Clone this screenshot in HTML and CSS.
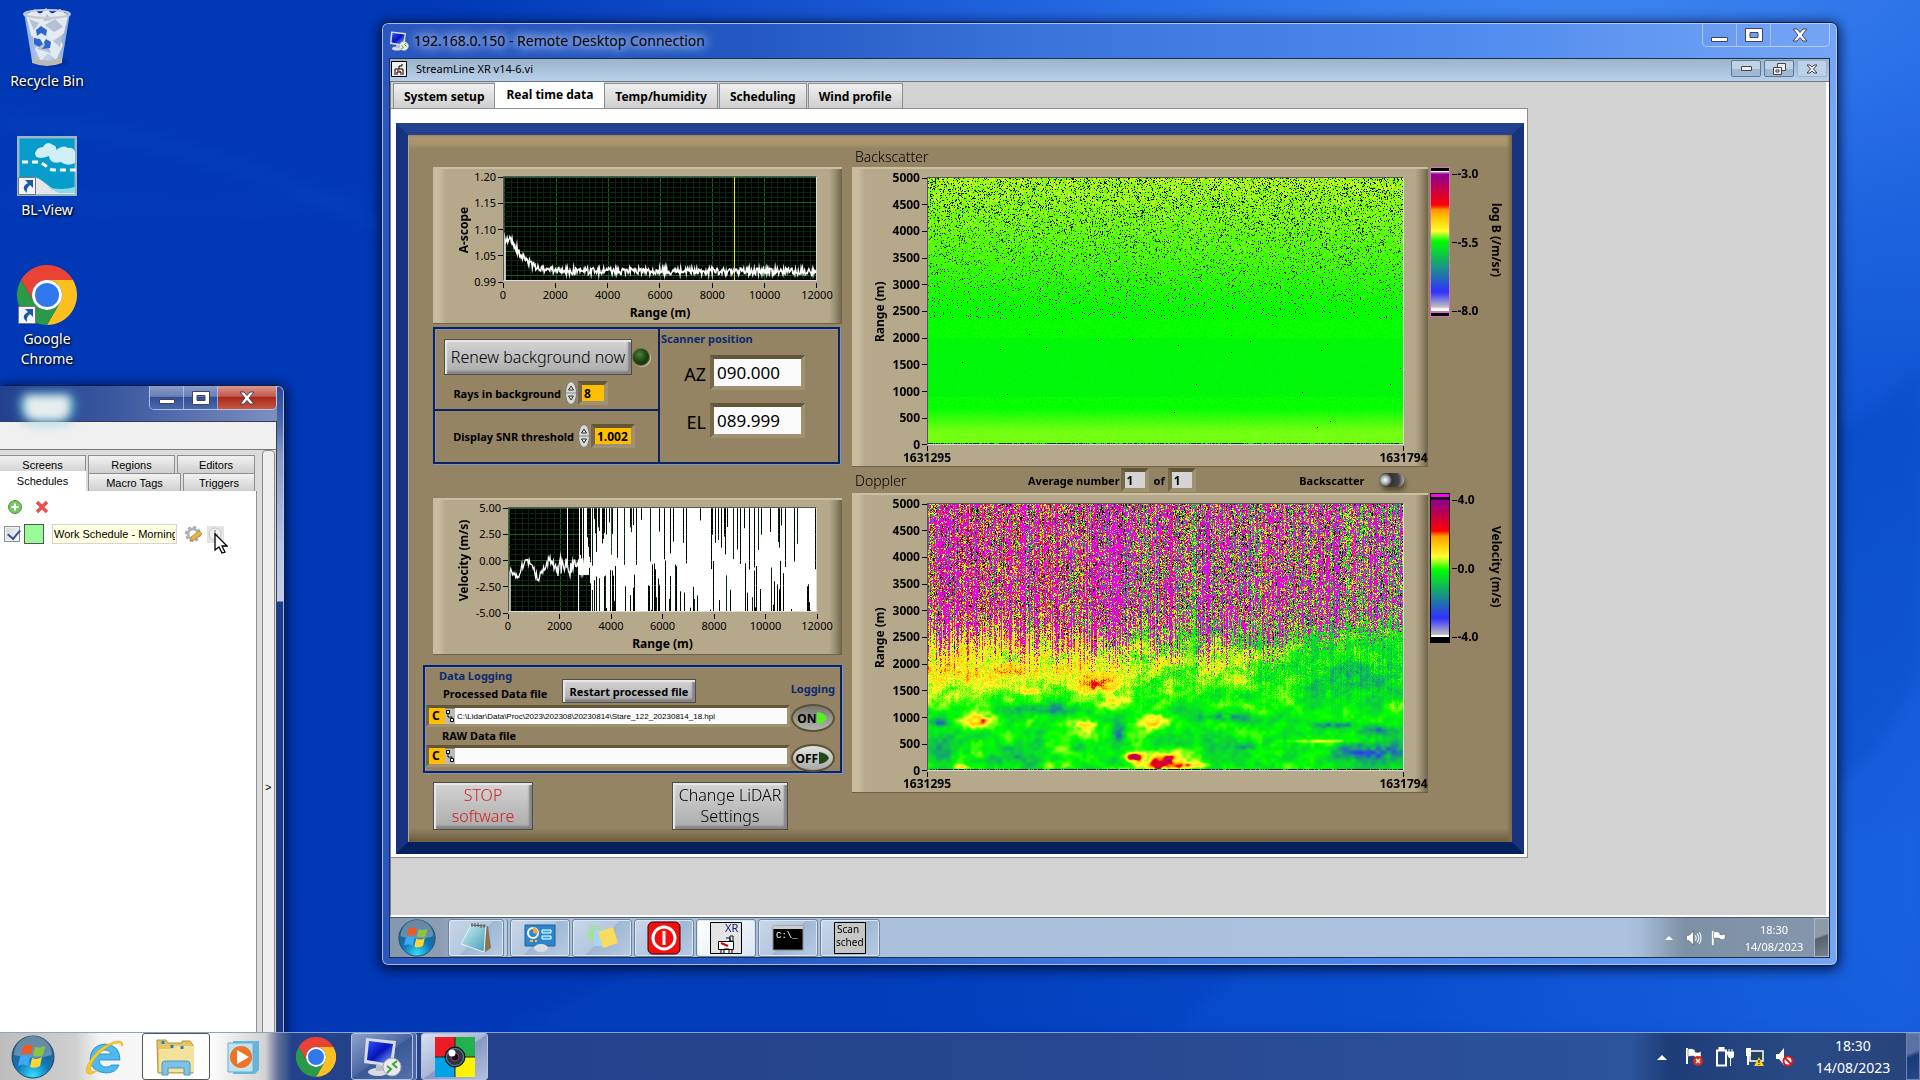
FILE: index.html
```html
<!DOCTYPE html>
<html lang="en">
<head>
    <meta charset="UTF-8">
    <meta name="viewport" content="width=device-width, initial-scale=1.0">
    <title>StreamLine XR - Remote Desktop</title>
    <link rel="stylesheet" href="styles.css">
</head>
<body>
    <!-- Shared icons -->
    <svg class="sprite" width="0" height="0" aria-hidden="true">
        <defs>
            <radialGradient id="orbFill" cx="50%" cy="95%" r="90%">
                <stop offset="0" stop-color="#35e0ff"/>
                <stop offset="0.45" stop-color="#1176b4"/>
                <stop offset="1" stop-color="#2f5878"/>
            </radialGradient>
            <linearGradient id="screenFill" x1="0" y1="0" x2="1" y2="1">
                <stop offset="0" stop-color="#2f55ff"/>
                <stop offset="0.5" stop-color="#0614b8"/>
                <stop offset="1" stop-color="#8db4ff"/>
            </linearGradient>
            <linearGradient id="paperFill" x1="0" y1="0" x2="1" y2="1">
                <stop offset="0" stop-color="#d5f2f6"/>
                <stop offset="1" stop-color="#3f9cb4"/>
            </linearGradient>
            <linearGradient id="binFill" x1="0" y1="0" x2="1" y2="0">
                <stop offset="0" stop-color="#a5bfe8"/>
                <stop offset="0.5" stop-color="#e4edf8"/>
                <stop offset="1" stop-color="#9db7de"/>
            </linearGradient>
        </defs>
        <symbol id="chrome" viewBox="0 0 48 48">
            <path fill="#ea4335" d="M3.2 12A24 24 0 0 1 44.8 12H24A12 12 0 0 0 13.6 30Z"/>
            <path fill="#fcc01e" d="M44.8 12A24 24 0 0 1 24 48L34.4 30A12 12 0 0 0 24 12Z"/>
            <path fill="#2a9a48" d="M24 48A24 24 0 0 1 3.2 12L13.6 30A12 12 0 0 0 34.4 30Z"/>
            <circle cx="24" cy="24" r="12" fill="#fff"/>
            <circle cx="24" cy="24" r="9.6" fill="#2f79ec"/>
        </symbol>
        <symbol id="orb" viewBox="0 0 44 44">
            <circle cx="22" cy="22" r="21" fill="url(#orbFill)" stroke="#164a74"/>
            <path d="M3 20A19 19 0 0 1 41 20Q22 26 3 20Z" fill="#fff" opacity="0.28"/>
            <path fill="#ee5a24" d="M12 11Q17 8 22 11L20 20Q15 17 10 20Z"/>
            <path fill="#8cc63e" d="M24 12Q28 14 34 11L32 20Q27 23 22 20Z"/>
            <path fill="#3fa9f5" d="M9 22Q14 19 19 22L17 31Q12 28 7 31Z"/>
            <path fill="#fdd835" d="M21 23Q26 25 31 22L29 31Q24 34 19 32Z"/>
        </symbol>
        <symbol id="rdc" viewBox="0 0 40 40">
            <ellipse cx="16" cy="35" rx="10" ry="4" fill="#d9dde3"/>
            <path d="M14 28h8v6h-8z" fill="#b9bec8"/>
            <path d="M4 1L34 4L31 30L2 26Z" fill="#d8dce4"/>
            <path d="M7 4L31 7L28 27L5 23Z" fill="url(#screenFill)"/>
            <circle cx="30" cy="30" r="9" fill="#e9ebed" stroke="#aaa"/>
            <path d="M25 29l4 3-4 4M35 24l-4 3 4 4" fill="none" stroke="#3fa535" stroke-width="2"/>
        </symbol>
        <symbol id="shortcut" viewBox="0 0 18 18">
            <path d="M.5.5h17v17H.5z" fill="#f1f5fa" stroke="#777"/>
            <path d="M7 3h8v8l-3-3q-4 3-3 8q-7-6 1-10z" fill="#1d5aa6"/>
        </symbol>
        <symbol id="speaker" viewBox="0 0 18 18">
            <path d="M1 6h3l5-5v16l-5-5H1z" fill="#fff" stroke="#444" stroke-width="0.6"/>
            <path d="M11 6q2 3 0 6M13 4q4 5 0 10M15.500 2.500q4 6 0 13" fill="none" stroke="#fff" stroke-width="1.200"/>
        </symbol>
        <symbol id="flag" viewBox="0 0 18 18">
            <path d="M2 1v16" stroke="#fff" stroke-width="2"/>
            <path d="M3 2q4-1 7 1v2q3 1 6-.5v5q-3 2-6 1v-1q-3-1-7 0z" fill="#fff" stroke="#444" stroke-width="0.500"/>
        </symbol>
    </svg>

    <main class="desktop">
        <div class="workarea">
            <svg class="wallpaper" viewBox="0 0 1920 1080" preserveAspectRatio="none" aria-hidden="true">
                <path d="M0 128Q170 132 380 235T900 560" fill="none" stroke="#1d63dc" stroke-width="14" opacity="0.16"/>
                <path d="M0 205Q200 230 390 200T800 60" fill="none" stroke="#1d63dc" stroke-width="8" opacity="0.12"/>
                <path d="M700 980Q1150 950 1920 700V1080H500Z" fill="#1264e6" opacity="0.14"/>
                <path d="M1180 1080Q1250 980 1400 960L1920 860V1080Z" fill="#1a6cec" opacity="0.14"/>
                <path d="M1830 450Q1880 430 1920 380V700Q1880 800 1830 820Z" fill="#0040b8" opacity="0.25"/>
            </svg>

            <nav class="icons">
                <a class="desk-icon" href="#">
                    <svg width="60" height="60" viewBox="0 0 60 60">
                        <ellipse cx="34" cy="55" rx="18" ry="5" fill="#032a80" opacity="0.5"/>
                        <path d="M7 6L15 54Q30 62 45 54L53 6Z" fill="url(#binFill)" opacity="0.85"/>
                        <path d="M9 8l9-6 5 6 6-7 6 6 8-5 8 7-4 17-5 5 4 7-7 15-8-7-7 8-6-12 5-6-9-8z" fill="#e3eaf2"/>
                        <path d="M12 12l10 4-5 7zM28 18l10-6 8 8-9 5zM20 42l9-8 5 12zM36 34l9-6-2 12zM30 7l5 6-9 1z" fill="#b3c1d2"/>
                        <path d="M19 23l5-4 6 4-1 6-5-3-4 3zM17 31l6 1 3 5-4 3-5-3zM29 32l5 3-1 6-8 1 3-4-1-3z" fill="#2b67ca"/>
                        <path d="M15 50Q30 57 45 50V56Q30 62 15 56Z" fill="#b9b9b6"/>
                        <ellipse cx="30" cy="7" rx="23" ry="4" fill="none" stroke="#c7c9cc" stroke-width="2"/>
                    </svg>
                    <span>Recycle Bin</span>
                </a>
                <a class="desk-icon" href="#">
                    <svg width="60" height="60" viewBox="0 0 60 60">
                        <path d="M1 1h58v58H1z" fill="#069ccb" stroke="#9ab7c4" stroke-width="3"/>
                        <path d="M18 17q2-6 8-6 4-7 10-2 4 1 3 5 8-6 12-2 5-1 7 4v11q-8 4-14-1-11 3-12-6-14 5-14-3z" fill="#cfeff5"/>
                        <path d="M5 26h15q6 1 10 5 3 3 7 3h22" fill="none" stroke="#fff" stroke-width="3" stroke-dasharray="6 4"/>
                        <path d="M2 58V44q14-6 22 0l12 9q10 1 22-1v6z" fill="#e4e6e7"/>
                        <path d="M30 51q14 4 28 0v6H42z" fill="#8cd9e8"/>
                        <use href="#shortcut" x="1" y="41" width="18" height="18"/>
                    </svg>
                    <span>BL-View</span>
                </a>
                <a class="desk-icon" href="#">
                    <svg width="60" height="60" viewBox="0 0 60 60">
                        <use href="#chrome" width="60" height="60"/>
                        <use href="#shortcut" x="1" y="41" width="18" height="18"/>
                    </svg>
                    <span>Google<br>Chrome</span>
                </a>
            </nav>

            <!-- Scheduler window, half off the screen -->
            <section class="win scheduler">
                <header class="scheduler-title">
                    <div class="glass-spot"></div>
                    <div class="caption">
                        <button class="cap-btn" aria-label="Minimize"><svg width="16" height="14"><path d="M.5 8.500h15v4H.5z" fill="#fff" stroke="#445"/></svg></button>
                        <button class="cap-btn" aria-label="Maximize"><svg width="18" height="14"><path d="M.5.5h17v13H.5zM5 4.500h8v5H5z" fill="#fff" fill-rule="evenodd" stroke="#445"/></svg></button>
                        <button class="cap-btn cap-close" aria-label="Close"><svg width="16" height="14"><path d="M1 1h4l3 3.500L11 1h4l-5 6 5 6h-4L8 9.500 5 13H1l5-6z" fill="#fff" stroke="#445"/></svg></button>
                    </div>
                </header>
                <div class="scheduler-body">
                    <div class="menu-strip"></div>
                    <div class="scheduler-cols">
                        <div class="tabbook">
                            <div class="tab-row">
                                <button>Screens</button>
                                <button>Regions</button>
                                <button>Editors</button>
                            </div>
                            <div class="tab-row">
                                <button class="on">Schedules</button>
                                <button>Macro Tags</button>
                                <button>Triggers</button>
                            </div>
                            <div class="tab-page">
                                <div class="tools">
                                    <button class="plain" aria-label="Add"><svg width="16" height="16"><circle cx="8" cy="8" r="6.500" fill="#7cc565" stroke="#4b9440"/><path d="M7 4.500h2V7h2.500v2H9v2.500H7V9H4.500V7H7z" fill="#fff"/></svg></button>
                                    <button class="plain" aria-label="Delete"><svg width="16" height="16"><path d="M3 3l10 10M13 3L3 13" stroke="#e8504c" stroke-width="3.500"/></svg></button>
                                </div>
                                <div class="schedule">
                                    <input type="checkbox" class="tick" aria-label="Enabled" checked>
                                    <span class="swatch"></span>
                                    <input type="text" class="schedule-name" aria-label="Schedule name" value="Work Schedule - Morning">
                                    <button class="plain" aria-label="Edit"><svg width="18" height="18"><circle cx="8" cy="9" r="5" fill="none" stroke="#b3b7bb" stroke-width="3"/><circle cx="8" cy="9" r="7" fill="none" stroke="#a2a7ac" stroke-width="2" stroke-dasharray="3 2.500"/><path d="M5 16l1-4 8-6 3 3-8 6z" fill="#e9b544" stroke="#a8742b" stroke-width="0.700"/></svg></button>
                                    <button class="plain ghost" aria-label="Time"><svg width="17" height="17"><circle cx="8" cy="8" r="6" fill="#f0f0f0" stroke="#c6c6c6"/><path d="M8 4v5h3" fill="none" stroke="#666"/></svg></button>
                                </div>
                            </div>
                        </div>
                        <div class="gutter"><span>&gt;</span></div>
                    </div>
                </div>
            </section>

            <!-- Remote desktop session -->
            <section class="win remote">
                <header class="remote-title">
                    <svg width="20" height="20"><use href="#rdc"/></svg>
                    <h1>192.168.0.150 - Remote Desktop Connection</h1>
                    <div class="caption">
                        <button class="cap-btn" aria-label="Minimize"><svg width="17" height="14"><path d="M.5 9.500h16v4H.5z" fill="#fff" stroke="#445"/></svg></button>
                        <button class="cap-btn" aria-label="Restore"><svg width="18" height="14"><path d="M.5.5h17v13H.5zM5 4.500h8v5H5z" fill="#fff" fill-rule="evenodd" stroke="#445"/></svg></button>
                        <button class="cap-btn cap-close" aria-label="Close"><svg width="16" height="14"><path d="M1 1h4l3 3.500L11 1h4l-5 6 5 6h-4L8 9.500 5 13H1l5-6z" fill="#fff" stroke="#445"/></svg></button>
                    </div>
                </header>
                <div class="session">
                    <header class="mdi">
                        <svg width="16" height="16"><path d="M.5.5h15v15H.5z" fill="#eee" stroke="#000"/><path d="M4 14V8h8v6M6 14v-3h4v3M8 8V5h3V3" fill="none" stroke="#000"/><path d="M6 9l4 2" stroke="#c00"/></svg>
                        <h2>StreamLine XR v14-6.vi</h2>
                        <button aria-label="Minimize"><svg width="11" height="6"><path d="M.5.5h10v4H.5z" fill="#eee" stroke="#444"/></svg></button>
                        <button aria-label="Restore"><svg width="13" height="12"><path d="M4.500.5h8v7h-8z" fill="#eee" stroke="#444"/><path d="M.5 4.500h8v7h-8zM3 7h3v2H3z" fill="#eee" stroke="#444"/></svg></button>
                        <button class="faded" aria-label="Close"><svg width="12" height="10"><path d="M1 1h3l2 2 2-2h3L7.500 5 11 9H8L6 7 4 9H1l3.500-4z" fill="#eee" stroke="#444"/></svg></button>
                    </header>

                    <div class="workspace">
                        <div class="vi">
                            <div class="vi-tabs">
                                <button>System setup</button>
                                <button class="on">Real time data</button>
                                <button>Temp/humidity</button>
                                <button>Scheduling</button>
                                <button>Wind profile</button>
                            </div>
                            <div class="vi-page">
                                <div class="panel">
                                    <div class="left">
                                        <figure class="frame scope">
                                            <span class="ylabel">A-scope</span>
                                            <div class="yaxis"><span>1.20</span><span>1.15</span><span>1.10</span><span>1.05</span><span>0.99</span></div>
                                            <canvas id="ascope"></canvas>
                                            <div class="xaxis"><span>0</span><span>2000</span><span>4000</span><span>6000</span><span>8000</span><span>10000</span><span>12000</span></div>
                                            <figcaption>Range (m)</figcaption>
                                        </figure>

                                        <div class="box controls">
                                            <div class="renew">
                                                <div class="line">
                                                    <button class="metal big">Renew background now</button>
                                                    <i class="led"></i>
                                                </div>
                                                <div class="line num-line">
                                                    <label for="rays">Rays in background</label>
                                                    <svg class="spin" width="12" height="24"><ellipse cx="6" cy="12" rx="5.500" ry="11.500" fill="#d9d9d6" stroke="#777"/><path d="M1 12h10" stroke="#888"/><path d="M3.500 9L6 5l2.500 4zM3.500 15L6 19l2.500-4z" fill="none" stroke="#333"/></svg>
                                                    <input type="text" id="rays" class="yellow short" value="8">
                                                </div>
                                            </div>
                                            <div class="snr">
                                                <div class="line num-line">
                                                    <label for="snr">Display SNR threshold</label>
                                                    <svg class="spin" width="12" height="24"><ellipse cx="6" cy="12" rx="5.500" ry="11.500" fill="#d9d9d6" stroke="#777"/><path d="M1 12h10" stroke="#888"/><path d="M3.500 9L6 5l2.500 4zM3.500 15L6 19l2.500-4z" fill="none" stroke="#333"/></svg>
                                                    <input type="text" id="snr" class="yellow" value="1.002">
                                                </div>
                                            </div>
                                            <div class="scanner">
                                                <h3>Scanner position</h3>
                                                <div class="angle"><label for="az">AZ</label><input type="text" id="az" value="090.000" readonly></div>
                                                <div class="angle"><label for="el">EL</label><input type="text" id="el" value="089.999" readonly></div>
                                            </div>
                                        </div>

                                        <figure class="frame scope velocity">
                                            <span class="ylabel">Velocity (m/s)</span>
                                            <div class="yaxis"><span>5.00</span><span>2.50</span><span>0.00</span><span>-2.50</span><span>-5.00</span></div>
                                            <canvas id="velocity"></canvas>
                                            <div class="xaxis"><span>0</span><span>2000</span><span>4000</span><span>6000</span><span>8000</span><span>10000</span><span>12000</span></div>
                                            <figcaption>Range (m)</figcaption>
                                        </figure>

                                        <div class="box logging">
                                            <div class="files">
                                                <h3>Data Logging</h3>
                                                <div class="file-head">
                                                    <label for="proc">Processed Data file</label>
                                                    <button class="metal small">Restart processed file</button>
                                                </div>
                                                <div class="path">
                                                    <b>C</b>
                                                    <svg width="10" height="15"><path d="M0 0h10v15H0z" fill="#bbb"/><path d="M1.500 1.500h3v3h-3zM5.500 9.500h3v3h-3zM3 5v3h4v1" fill="#fff" stroke="#000"/></svg>
                                                    <input type="text" id="proc" value="C:\Lidar\Data\Proc\2023\202308\20230814\Stare_122_20230814_18.hpl">
                                                </div>
                                                <label class="raw" for="raw">RAW Data file</label>
                                                <div class="path">
                                                    <b>C</b>
                                                    <svg width="10" height="15"><path d="M0 0h10v15H0z" fill="#bbb"/><path d="M1.500 1.500h3v3h-3zM5.500 9.500h3v3h-3zM3 5v3h4v1" fill="#fff" stroke="#000"/></svg>
                                                    <input type="text" id="raw" value="">
                                                </div>
                                            </div>
                                            <div class="switches">
                                                <h3>Logging</h3>
                                                <button class="oval pressed">ON<svg width="12" height="14"><path d="M1 1q8 1 10 6-2 5-10 6z" fill="#55f020"/></svg></button>
                                                <button class="oval">OFF<svg width="12" height="14"><path d="M1 1q8 1 10 6-2 5-10 6z" fill="#22491a"/></svg></button>
                                            </div>
                                        </div>

                                        <div class="actions">
                                            <button class="metal big stop">STOP software</button>
                                            <button class="metal big lidar">Change LiDAR Settings</button>
                                        </div>
                                    </div>

                                    <div class="right">
                                        <h2>Backscatter</h2>
                                        <div class="map-row">
                                            <figure class="frame map">
                                                <span class="ylabel">Range (m)</span>
                                                <div class="yaxis"><span>5000</span><span>4500</span><span>4000</span><span>3500</span><span>3000</span><span>2500</span><span>2000</span><span>1500</span><span>1000</span><span>500</span><span>0</span></div>
                                                <canvas id="backscatter"></canvas>
                                                <div class="xaxis"><span>1631295</span><span>1631794</span></div>
                                            </figure>
                                            <div class="ramp beta"></div>
                                            <div class="ramp-axis"><span>-3.0</span><span>-5.5</span><span>-8.0</span></div>
                                            <span class="ramp-label">log B (/m/sr)</span>
                                        </div>
                                        <div class="doppler-head">
                                            <h2>Doppler</h2>
                                            <label for="avg">Average number</label>
                                            <input type="text" id="avg" value="1">
                                            <label for="avgof">of</label>
                                            <input type="text" id="avgof" value="1">
                                            <label class="toggle-label" for="mode">Backscatter</label>
                                            <input type="checkbox" id="mode" class="toggle">
                                        </div>
                                        <div class="map-row">
                                            <figure class="frame map">
                                                <span class="ylabel">Range (m)</span>
                                                <div class="yaxis"><span>5000</span><span>4500</span><span>4000</span><span>3500</span><span>3000</span><span>2500</span><span>2000</span><span>1500</span><span>1000</span><span>500</span><span>0</span></div>
                                                <canvas id="doppler"></canvas>
                                                <div class="xaxis"><span>1631295</span><span>1631794</span></div>
                                            </figure>
                                            <div class="ramp vel"></div>
                                            <div class="ramp-axis"><span>4.0</span><span>0.0</span><span>-4.0</span></div>
                                            <span class="ramp-label">Velocity (m/s)</span>
                                        </div>
                                    </div>
                                </div>
                            </div>
                        </div>
                    </div>

                    <footer class="rbar">
                        <button class="orb" aria-label="Start"><svg width="38" height="38"><use href="#orb"/></svg></button>
                        <button class="task stacked" aria-label="Notepad"><svg width="34" height="32"><path d="M22 4h7l3 22-6 4z" fill="#8b7350"/><path d="M12 3l15 1-2 26L2 22z" fill="url(#paperFill)" stroke="#e8f4f6"/><path d="M12 3l15 1M13 1v4M16 1v4M19 1v4M22 2v4M25 2v4" stroke="#555"/></svg></button>
                        <button class="task" aria-label="Control Panel"><svg width="34" height="32"><path d="M2 3h30v21H2z" fill="#2d86cc" stroke="#1b639e"/><circle cx="10" cy="11" r="5" fill="none" stroke="#fff" stroke-width="2"/><path d="M10 11V5a6 6 0 0 1 5 7z" fill="#f4a83c"/><path d="M19 8h9v3h-9zM19 14h9v3h-9z" fill="#28aee0" stroke="#fff"/><path d="M7 19h3M12 19h2" stroke="#fb4" stroke-width="2"/><ellipse cx="18" cy="26" rx="7" ry="4" fill="#d9dce0"/></svg></button>
                        <button class="task" aria-label="Sticky Notes"><svg width="34" height="32"><path d="M6 3l13 3-5 15L1 17z" fill="#a5e0a0"/><path d="M9 7h13v17H9z" fill="#a9d5f5"/><path d="M13 10l15-5 5 16-15 5z" fill="#f7dc5f"/></svg></button>
                        <button class="task" aria-label="Power"><svg width="34" height="34"><rect x="1" y="1" width="32" height="32" rx="5" fill="#f01010" stroke="#300"/><circle cx="17" cy="17" r="11" fill="none" stroke="#fff" stroke-width="3"/><path d="M17 10v14" stroke="#fff" stroke-width="3"/></svg></button>
                        <button class="task active" aria-label="StreamLine XR"><svg width="34" height="34"><path d="M1.500 1.500h31v31h-31z" fill="#e4e4e4" stroke="#000"/><text x="16" y="11" class="ico-xr">XR</text><path d="M9.500 20.500h15v8h-15zM12 28v4M23 28v4M15 32v-4h5v4M17 17h4v3M21 15h3v5h-3z" fill="#fff" stroke="#000"/><path d="M12 22l7 3" stroke="#c00" stroke-width="2"/></svg></button>
                        <button class="task" aria-label="Command Prompt"><svg width="34" height="34"><path d="M2 5h30v24H2z" fill="#000" stroke="#888"/><path d="M2 5h30v3H2z" fill="#ccc"/><text x="5" y="17" class="ico-cmd">C:\_</text></svg></button>
                        <button class="task" aria-label="Scan sched"><svg width="34" height="34"><path d="M1.500 1.500h31v31h-31z" fill="#c6c6c6" stroke="#000"/><text x="4" y="12" class="ico-scan">Scan</text><text x="3" y="25" class="ico-scan">sched</text></svg></button>
                        <div class="tray">
                            <svg width="8" height="5"><path d="M0 5l4-4 4 4z" fill="#fff"/></svg>
                            <svg width="17" height="16"><use href="#speaker"/></svg>
                            <svg width="16" height="16"><use href="#flag"/></svg>
                            <time>18:30<br>14/08/2023</time>
                        </div>
                        <button class="peek" aria-label="Show desktop"></button>
                    </footer>
                </div>
            </section>

            <svg class="pointer" width="14" height="22" viewBox="0 0 14 22"><path d="M1 1v16l4-3 3 6 3-1-3-6h5z" fill="#fff" stroke="#000" stroke-width="1.300"/></svg>
        </div>

        <footer class="taskbar">
            <button class="orb" aria-label="Start"><svg width="44" height="44"><use href="#orb"/></svg></button>
            <button class="pin" aria-label="Internet Explorer"><svg width="40" height="40"><path d="M36 23H15q1 7 7 7 4 0 5-2h8q-3 8-13 8Q7 35 6 22 7 8 21 7q15 1 15 16zM15 17h12q-1-4-6-4t-6 4z" fill="#4db9ee" stroke="#1a86c4" stroke-width="0.800"/><path d="M39 8q0-6-10-3Q12 11 4 27q-5 11 3 10 4-1 7-4-6 3-7 1-2-5 6-15Q26 5 36 6q2 1 1 3z" fill="#f6c92c" stroke="#d9a514" stroke-width="0.500"/></svg></button>
            <button class="pin open" aria-label="Explorer"><svg width="42" height="40"><path d="M2 7V3h9l2 3h14v-2h8l3 4v28H3z" fill="#e3c665" stroke="#b69438"/><path d="M4 12h13l2-3h20v26H4z" fill="#f5e29a"/><path d="M7 38V27q0-3 3-3h22q3 0 3 3v11h-6v-7H13v7z" fill="#7ec3e6" stroke="#4b98c3"/><path d="M8 4v3M17 8v3M27 9v3" stroke="#2a7fc0" stroke-width="3"/></svg></button>
            <button class="pin" aria-label="Media Player"><svg width="38" height="38"><path d="M8 3h26v29l-4 4H8z" fill="#69b4da"/><path d="M3 5h25v29H3z" fill="#bfe2f2" stroke="#6aaed0"/><circle cx="16" cy="19" r="11" fill="#ee7326"/><path d="M12 12l12 7-12 7z" fill="#fff"/></svg></button>
            <button class="pin" aria-label="Chrome"><svg width="40" height="40"><use href="#chrome"/></svg></button>
            <button class="pin glass first" aria-label="Remote Desktop"><svg width="40" height="40"><use href="#rdc"/></svg></button>
            <button class="pin glass lit" aria-label="Camera"><svg width="40" height="40"><path d="M0 0h20v20H0z" fill="#ed1c24"/><path d="M20 0h20v20H20z" fill="#22b14c"/><path d="M0 20h20v20H0z" fill="#00a2e8"/><path d="M20 20h20v20H20z" fill="#fff200"/><path d="M20 0v40M0 20h40" stroke="#222"/><circle cx="20" cy="20" r="10" fill="#333" stroke="#0a0a0a"/><circle cx="20" cy="20" r="8.500" fill="none" stroke="#39c"/><circle cx="20" cy="20" r="4" fill="#111" stroke="#938"/><circle cx="17" cy="16" r="3.500" fill="#fff"/></svg></button>
            <div class="tray">
                <svg width="10" height="6"><path d="M0 6l5-5 5 5z" fill="#fff"/></svg>
                <svg width="19" height="20" viewBox="0 0 19 20"><use href="#flag" width="18" height="18"/><circle cx="13" cy="14" r="5" fill="#d8291d"/><path d="M11 12l4 4M15 12l-4 4" stroke="#fff" stroke-width="1.500"/></svg>
                <svg width="19" height="20"><path d="M2 3.500h9v15H2zM4.500 1h4v2h-4z" fill="none" stroke="#fff" stroke-width="2"/><path d="M12 5h7v3q0 3-3 3t-3-3zM14 2v3M17 2v3M15.500 10v9" fill="#fff" stroke="#fff"/></svg>
                <svg width="19" height="20"><path d="M5 4h13v10H5z" fill="#29405f" stroke="#fff" stroke-width="1.500"/><path d="M1 1h5v8H4v9H2V9H1z" fill="#fff"/><path d="M14 10l5 9H9z" fill="#f5d222"/><path d="M14 13v3M14 17v1" stroke="#000"/></svg>
                <svg width="19" height="20"><path d="M1 7h3l5-6v17l-5-6H1z" fill="#fff"/><circle cx="13" cy="14" r="4.500" fill="#fff" stroke="#d8191d" stroke-width="2"/><path d="M10 11l6 6" stroke="#d8191d" stroke-width="2"/></svg>
                <time>18:30<br>14/08/2023</time>
            </div>
            <button class="peek" aria-label="Show desktop"></button>
        </footer>
    </main>

    <script src="charts.js"></script>
</body>
</html>
```

FILE: styles.css
```css
* {
    box-sizing: border-box;
}
body {
    margin: 0;
    font-family: "Noto Sans", "Open Sans", sans-serif;
    font-size: 12px;
    color: #000;
}
h1, h2, h3, figure {
    margin: 0;
    font-weight: normal;
}
button, input {
    font: inherit;
    color: inherit;
    margin: 0;
    padding: 0;
    border: 0;
    border-radius: 0;
    background: none;
}
button {
    cursor: pointer;
}
svg {
    display: block;
    flex: none;
}
.sprite {
    position: absolute;
}

/* desktop */
.desktop {
    display: flex;
    flex-direction: column;
    height: 100vh;
    overflow: hidden;
    background:
        radial-gradient(ellipse 60% 46% at 82% -4%, #4189f2 0%, rgba(46, 116, 236, 0.75) 45%, rgba(10, 70, 205, 0) 100%),
        radial-gradient(ellipse 30% 60% at 103% 80%, #1a62de 0%, rgba(10, 80, 214, 0) 100%),
        linear-gradient(90deg, #0038b6 0%, #0038b4 45%, #0649cc 80%, #0a4dcd 100%);
}
.workarea {
    position: relative;
    flex: 1;
    overflow: hidden;
}
.wallpaper {
    position: absolute;
    width: 100%;
    height: 100%;
    filter: blur(8px);
}
.icons {
    position: relative;
    display: flex;
    flex-direction: column;
    gap: 43px;
    width: 94px;
    padding-top: 7px;
}
.desk-icon {
    display: flex;
    flex-direction: column;
    align-items: center;
    gap: 4px;
    min-height: 86px;
    color: #fff;
    font-size: 14px;
    line-height: 20px;
    text-align: center;
    text-decoration: none;
    text-shadow: 1px 1px 2px #000, 0 1px 3px #001a50;
}

/* windows */
.win {
    position: absolute;
    display: flex;
    flex-direction: column;
    border: 1px solid #0b1c44;
    border-radius: 7px 7px 0 0;
    box-shadow: inset 0 0 0 1px rgba(190, 215, 255, 0.8), 0 2px 12px 2px rgba(0, 8, 40, 0.75);
}
.caption {
    display: flex;
    align-self: flex-start;
    height: 24px;
    border: 1px solid rgba(200, 220, 255, 0.75);
    border-top: 0;
    border-radius: 0 0 5px 5px;
    overflow: hidden;
}
.cap-btn {
    display: flex;
    align-items: center;
    justify-content: center;
    width: 34px;
    border-right: 1px solid rgba(190, 210, 255, 0.65);
}
.cap-close {
    width: 58px;
    border-right: 0;
}

/* scheduler */
.scheduler {
    left: -2px;
    top: 385px;
    bottom: -8px;
    width: 287px;
    padding: 0 7px 0 0;
    background: linear-gradient(180deg, #27489b 0, #4a66ac 34px, #8a99c4 70px, #b9c4de 160px, #c4cde4 215px, #1b3c94 216px, #193886 100%);
    font-family: "Liberation Sans", Arial, sans-serif;
    font-size: 11px;
}
.scheduler-title {
    display: flex;
    justify-content: space-between;
    height: 35px;
    background: linear-gradient(90deg, #23408f, #3a569f 40%, #7c8fbf);
}
.glass-spot {
    width: 46px;
    height: 26px;
    margin: 9px 0 0 25px;
    background: #e4eeee;
    border-radius: 4px 4px 12px 12px;
    box-shadow: 4px 0 6px #45aac0, -4px 0 6px #45aac0;
    filter: blur(4px);
}
.scheduler .cap-btn {
    background: linear-gradient(180deg, #8a9cc7 0%, #6980b5 45%, #324f96 50%, #4a69aa 100%);
}
.scheduler .cap-close {
    background: linear-gradient(180deg, #d99a92 0%, #c55549 45%, #a62a1b 50%, #c9563f 100%);
}
.scheduler-body {
    display: flex;
    flex-direction: column;
    flex: 1;
    border: 1px solid #333d55;
    border-left: 0;
    background: #dcdcdc;
}
.menu-strip {
    height: 28px;
    background: #f0f0f0;
    border-bottom: 1px solid #777;
}
.scheduler-cols {
    display: flex;
    flex: 1;
    gap: 5px;
}
.tabbook {
    display: flex;
    flex-direction: column;
    flex: 1;
    padding-top: 5px;
}
.tab-row {
    display: flex;
    gap: 2px;
    height: 18px;
    padding-right: 2px;
}
.tab-row button {
    flex: 1;
    border: 1px solid #8c8e94;
    border-bottom: 0;
    background: linear-gradient(180deg, #f2f2f2, #cfcfcf);
}
.tab-row button:last-child {
    flex: none;
    width: 78px;
}
.tab-row:nth-child(2) button:last-child {
    width: 72px;
}
.tab-row:nth-child(2) button:nth-child(2) {
    flex: none;
    width: 93px;
}
.tab-row .on {
    margin-top: -2px;
    border: 0;
    background: #fff;
}
.tab-page {
    flex: 1;
    padding: 8px 0 0 5px;
    background: #fff;
    border-right: 1px solid #8c8e94;
}
.tools {
    display: flex;
    gap: 11px;
    padding-left: 3px;
}
.schedule {
    display: flex;
    align-items: center;
    gap: 4px;
    margin-top: 9px;
}
.tick {
    appearance: none;
    width: 16px;
    height: 16px;
    border: 1px solid #8e8f8f;
    background: linear-gradient(135deg, #cdd3db, #fff);
    box-shadow: inset 0 0 0 1px #f4f4f4;
}
.tick:checked::before {
    content: "";
    display: block;
    width: 6px;
    height: 10px;
    margin: 0 0 0 5px;
    border: solid #3b4f92;
    border-width: 0 2px 2px 0;
    transform: rotate(40deg);
}
.swatch {
    width: 20px;
    height: 20px;
    background: #98fb98;
    border: 1px solid #555;
}
.schedule-name {
    width: 125px;
    height: 20px;
    margin: 0 4px;
    padding: 0 1px;
    border: 1px solid #d4d4d4;
    background: #ffffe1;
}
.ghost {
    background: #e4e4e4;
}
.gutter {
    display: flex;
    align-items: center;
    width: 13px;
    padding: 86px 0 0 2px;
    margin-right: 1px;
    border: 1px solid #888;
    border-radius: 4px;
    background: #eee;
}
.pointer {
    position: absolute;
    left: 214px;
    top: 533px;
}

/* remote window */
.remote {
    left: 381px;
    top: 22px;
    right: 82px;
    height: 944px;
    padding: 0 7px 7px;
    border-radius: 7px;
    background: linear-gradient(90deg, #2a56bf 0%, #2358c2 25%, #3a74da 45%, #4f8cee 75%, #76a5f5 100%);
}
.remote-title {
    display: flex;
    align-items: center;
    gap: 5px;
    height: 35px;
}
.remote-title h1 {
    flex: 1;
    font-size: 14px;
    line-height: 20px;
    text-shadow: 0 0 8px #c5d6f8, 0 0 12px #c5d6f8, 0 0 16px #a9c2f2;
}
.session {
    display: flex;
    flex-direction: column;
    flex: 1;
    border: 1px solid #1c2f50;
    background: #d2d2d2;
}
.mdi {
    display: flex;
    align-items: center;
    gap: 3px;
    height: 23px;
    padding: 0 2px 3px 1px;
    background: linear-gradient(180deg, #9cb3cc, #b9d0ea);
    border-bottom: 1px solid #6d7680;
}
.mdi h2 {
    flex: 1;
    padding-left: 6px;
    font-size: 11px;
}
.mdi button {
    display: flex;
    align-items: center;
    justify-content: center;
    width: 30px;
    height: 17px;
    border: 1px solid #5d7896;
    border-radius: 2px;
    background: linear-gradient(180deg, #c0d2e6 50%, #9fb8d3 50%);
}
.mdi .faded {
    border-color: #9bb4cd;
    background: #bcd2ea;
}
.workspace {
    flex: 1;
    border-left: 1px solid #808080;
    border-right: 3px solid #fff;
    border-bottom: 2px solid #fff;
}
.vi {
    width: 79.200%;
}
.vi-tabs {
    display: flex;
    gap: 1px;
    height: 26px;
    padding-left: 2px;
}
.vi-tabs button {
    margin-top: 1px;
    padding: 0 10px;
    border: 1px solid #8c8e94;
    border-bottom: 0;
    background: linear-gradient(180deg, #efefef, #cfcfcf);
    font-size: 12px;
    font-weight: bold;
}
.vi-tabs .on {
    margin: 0 -1px;
    padding: 0 10px 3px;
    border-color: #fff;
    background: #fff;
}
.vi-page {
    padding: 14px 3px 3px 5px;
    background: #fff;
    border-top: 1px solid #8c8e94;
    border-right: 1px solid #8c8e94;
    border-bottom: 1px solid #8c8e94;
}
.panel {
    display: flex;
    gap: 10px;
    height: 731px;
    padding: 11px 0 0 15px;
    border: 12px solid #17327f;
    border-top-color: #23418f;
    border-bottom-color: #03205f;
    background: linear-gradient(180deg, #ae9870 0, #a8936b 9px, #948464 14px, #948464 693px, #6b5b3c 100%);
    box-shadow: inset -3px 0 3px #7c6c4b, inset 1px 0 0 #b5a88a;
}

/* left column */
.left {
    width: 419px;
    padding-top: 21px;
}
.frame {
    display: grid;
    background:
        linear-gradient(90deg, #cabd9f 0, #cabd9f 6px, rgba(182, 169, 139, 0) 13px),
        linear-gradient(270deg, #6d6148 0, #968a6d 6px, rgba(182, 169, 139, 0) 13px),
        #b6a98b;
    border-top: 2px solid #cabf9f;
    border-bottom: 1px solid #6f6247;
}
.frame canvas {
    width: 100%;
    border: 1px solid #666;
    border-color: #555 #ddd #ddd #555;
}
.ylabel, .ramp-label {
    writing-mode: vertical-rl;
    text-align: center;
    font-weight: bold;
    line-height: 16px;
}
.ylabel {
    transform: rotate(180deg);
}
.yaxis {
    display: flex;
    flex-direction: column;
    justify-content: space-between;
    margin: -6px 0;
    line-height: 14px;
}
.yaxis span {
    display: flex;
    align-items: center;
    justify-content: flex-end;
    gap: 2px;
}
.yaxis span::after, .ramp-axis span::before {
    content: "";
    width: 5px;
    height: 1px;
    background: #000;
}
.xaxis {
    grid-column: 3;
    display: flex;
    justify-content: space-between;
    line-height: 14px;
}
.xaxis span {
    display: flex;
    flex-direction: column;
    align-items: center;
    width: 50px;
    margin: 0 -25px;
}
.xaxis span::before {
    content: "";
    width: 1px;
    height: 5px;
    background: #000;
}
.scope {
    grid-template-columns: 16px 31px 1fr;
    height: 157px;
    margin-left: 10px;
    padding: 7px 25px 0 23px;
    font-size: 11px;
}
.scope canvas {
    height: 105px;
}
.scope figcaption {
    grid-column: 3;
    text-align: center;
    font-size: 12px;
    font-weight: bold;
    line-height: 16px;
}
.scope .ylabel {
    font-size: 12px;
}
.velocity {
    grid-template-columns: 16px 36px 1fr;
    margin-top: 34px;
}
.scope .ylabel, .scope .yaxis, .scope canvas {
    grid-row: 1;
}
.velocity .ylabel {
    margin: -2px 0;
    white-space: nowrap;
}
.box {
    border: 2px solid #0a2463;
    box-shadow: inset 1px 1px 0 #7d94c9, 1px 1px 0 #7d94c9;
}
.box h3 {
    color: #0c2a72;
    font-size: 11px;
    font-weight: bold;
    line-height: 16px;
}
.box label {
    font-size: 11px;
    font-weight: bold;
}
.controls {
    display: grid;
    grid-template-columns: 223px 1fr;
    grid-template-rows: 82px 1fr;
    height: 137px;
    margin: 3px 2px 0 10px;
}
.line {
    display: flex;
    align-items: center;
}
.renew {
    padding: 10px 0 0 9px;
    border-bottom: 2px solid #0a2463;
}
.metal {
    border: 1px solid #4d4d4d;
    background: linear-gradient(180deg, #d4d4d4, #ababab);
    box-shadow: inset 2px 2px 1px #e8e8e8, inset -3px -3px 2px #858585;
}
.big {
    font-size: 16px;
    font-weight: 300;
}
.renew .metal {
    width: 188px;
    height: 36px;
    white-space: nowrap;
}
.led {
    width: 18px;
    height: 18px;
    border-radius: 50%;
    border: 1px solid #6f6446;
    background: radial-gradient(circle at 40% 35%, #4d8038, #1c4410 50%, #0c2606);
    box-shadow: 1px 1px 1px #cdbf9d;
}
.num-line {
    justify-content: flex-end;
    gap: 4px;
    padding: 6px 50px 0 0;
}
.yellow {
    width: 44px;
    height: 24px;
    padding: 0 2px;
    border: 4px solid #a09170;
    border-color: #635637 #a09170 #a09170 #75674a;
    background: #ffbf00;
    font-size: 12px;
    font-weight: bold;
}
.short {
    width: 30px;
}
.num-line .yellow {
    margin-left: -3px;
}
.snr {
    padding: 7px 0 0;
}
.snr .num-line {
    padding-right: 23px;
}
.scanner {
    grid-column: 2;
    grid-row: 1 / 3;
    padding: 2px 0 0 1px;
    border-left: 2px solid #0a2463;
}
.angle {
    display: flex;
    justify-content: flex-end;
    align-items: center;
    gap: 4px;
    padding-right: 33px;
    margin-top: 8px;
    margin-bottom: 13px;
}
.box .angle label {
    font-size: 18px;
    font-weight: normal;
    padding-top: 3px;
}
.angle input {
    width: 95px;
    height: 35px;
    padding: 0 3px;
    border: 4px solid #a09170;
    border-color: #635637 #a09170 #a09170 #75674a;
    background: #fbfbfb;
    font-size: 17px;
}
.logging {
    display: flex;
    justify-content: space-between;
    height: 108px;
    margin-top: 10px;
    padding: 1px 5px 0 1px;
}
.files {
    width: 364px;
}
.files h3 {
    padding-left: 13px;
}
.file-head {
    display: flex;
    align-items: center;
    justify-content: space-between;
    height: 24px;
    padding: 3px 94px 3px 17px;
    margin-top: -3px;
}
.small {
    height: 24px;
    width: 134px;
    margin-top: -4px;
    font-size: 11px;
    font-weight: bold;
}
.path {
    display: flex;
    align-items: center;
    height: 22px;
    border: 3px solid #a09170;
    border-color: #635637 #a09170 #a09170 #75674a;
}
.path b {
    width: 16px;
    padding-left: 3px;
    background: #ffbf00;
    line-height: 16px;
}
.path input {
    flex: 1;
    height: 16px;
    padding: 0 2px;
    background: #fbfbfb;
    font-family: "Liberation Sans", Arial, sans-serif;
    font-size: 8px;
}
.files .raw {
    display: block;
    padding-left: 16px;
    line-height: 18px;
}
.switches {
    display: flex;
    flex-direction: column;
    align-items: center;
}
.switches h3 {
    margin: 13px 0 7px;
}
.oval {
    display: flex;
    flex: none;
    align-items: center;
    justify-content: center;
    width: 44px;
    height: 28px;
    margin-bottom: 12px;
    border: 2px solid #5b5238;
    border-radius: 50%;
    background: linear-gradient(180deg, #e3e3df, #a8a8a4);
    font-size: 12px;
    font-weight: bold;
}
.pressed {
    background: linear-gradient(180deg, #77776f, #b4b4ae);
}
.actions {
    display: flex;
    justify-content: space-between;
    padding: 9px 54px 0 10px;
}
.actions .metal {
    width: 100px;
    height: 48px;
    line-height: 21px;
}
.actions .lidar {
    width: 116px;
}
.stop {
    color: #d81e1e;
}

/* right column */
.right {
    flex: 1;
}
.right h2 {
    padding-left: 3px;
    font-size: 14px;
    font-weight: 300;
    line-height: 21px;
}
.map-row {
    display: flex;
    height: 300px;
    gap: 2px;
}
.map {
    flex: 1;
    grid-template-columns: 16px 39px 1fr;
    padding: 8px 24px 0 20px;
    font-weight: bold;
}
.map canvas {
    height: 268px;
}
.map .yaxis, .map .xaxis, .ramp-axis {
    font-size: 12px;
}
.map .ylabel, .map .yaxis, .map canvas {
    grid-row: 1;
}
.ramp {
    width: 20px;
    height: 150px;
    border: 1px solid #000;
}
.beta {
    border-color: #d070c8;
    background: linear-gradient(180deg, #000 0 3px, #fff 3px 4px, #d070c8 4px 5px, #8c0090 6px, #ff0000 37px, #ff9900 42px, #ffc000 49px, #ffff30 63px, #00ff00 73px, #3030ff 124px, #c0c0c0 139px, #fff 141px 143px, #d070c8 143px 145px, #000 145px);
}
.vel {
    background: linear-gradient(180deg, #ff00ff 0 3px, #000 3px 5px, #8c0090 6px, #ff0000 37px, #ff9900 42px, #ffc000 49px, #ffff30 63px, #00ff00 76px, #3030ff 124px, #c0c0c0 141px, #fff 141px 143px, #000 143px);
}
.ramp-axis {
    display: flex;
    flex-direction: column;
    justify-content: space-between;
    width: 34px;
    height: 151px;
    font-weight: bold;
    line-height: 14px;
}
.ramp-axis span {
    display: flex;
    align-items: center;
    gap: 1px;
}
.ramp-label {
    width: 16px;
    height: 147px;
    margin: 0 8px 0 0;
}
.doppler-head {
    display: flex;
    align-items: center;
    height: 26px;
    padding-right: 108px;
    font-weight: bold;
    font-size: 11px;
}
.doppler-head h2 {
    width: 176px;
}
.doppler-head input[type="text"] {
    width: 28px;
    height: 24px;
    margin: 0 4px 0 1px;
    padding: 0 2px;
    border: 4px solid #a09170;
    border-color: #635637 #a09170 #a09170 #75674a;
    background: #d4d4d4;
    font-size: 12px;
}
.doppler-head label[for="avgof"] {
    padding: 0 2px 0 1px;
}
.toggle-label {
    margin-left: auto;
}
.toggle {
    appearance: none;
    width: 25px;
    height: 14px;
    margin-left: 14px;
    border-radius: 7px;
    background: radial-gradient(circle at 6px 7px, #fff 0, #aaa 4px, #333 7px, #444 14px, #ccc 100%);
    box-shadow: 2px 4px 4px #5b4f36;
}

/* task bars */
.rbar, .taskbar {
    display: flex;
    align-items: center;
}
.rbar {
    gap: 2px;
    height: 40px;
    border-top: 1px solid #4c5c6c;
    background: linear-gradient(90deg, #8497ac 0, #8b9eb4 50px, #a9bfda 90px, #abc1dd 86%, #a5bbd6 87%, #7c90a6 90%, #8497ac 100%);
}
.rbar .orb {
    width: 56px;
    padding-left: 8px;
}
.task {
    display: flex;
    align-items: center;
    justify-content: center;
    width: 60px;
    height: 38px;
    border: 1px solid #6d839d;
    border-radius: 3px;
    background: linear-gradient(135deg, #c9d7e8 0%, #b3c7df 50%, #9fb7d3 51%, #b7cbe3 100%);
    box-shadow: inset 0 0 0 1px #dce7f4;
}
.active {
    background: linear-gradient(135deg, #fff, #dbe6f3);
}
.stacked {
    width: 56px;
    margin-right: 4px;
    box-shadow: inset 0 0 0 1px #dce7f4, 3px 0 0 #b7cbe3, 4px 0 0 #6d839d;
}
.ico-xr {
    font-size: 11px;
    fill: #102080;
}
.ico-cmd {
    font-family: "Liberation Mono", monospace;
    font-size: 9px;
    fill: #fff;
}
.ico-scan {
    font-size: 10px;
}
.tray {
    display: flex;
    align-items: center;
    margin-left: auto;
    color: #fff;
    text-align: center;
}
.rbar .tray {
    gap: 9px;
    font-size: 11px;
    line-height: 17px;
}
.rbar .tray svg:first-child {
    margin-right: 3px;
}
.rbar time {
    width: 62px;
    margin: 0 7px;
}
.peek {
    align-self: stretch;
    width: 15px;
    border: 1px solid #a9b9ca;
    background: linear-gradient(160deg, #8e9aa8 45%, #56626f 50%, #76838f);
}
.taskbar {
    position: relative;
    height: 48px;
    border-top: 1px solid #8ba3cc;
    background:
        linear-gradient(90deg, #bdbdbd 0, #cfcfcf 75px, #f4f4f4 100px, #fdfdfd 210px, #d2d2d2 265px, #63719a 278px, rgba(36, 66, 138, 0) 292px),
        linear-gradient(90deg, #22408a 0, #26468e 50%, #2b5299 82%, #2c549a 85%, #1d3c78 87%, #2a4a86 94%, #274379 100%);
}
.taskbar .orb {
    width: 66px;
    padding-left: 11px;
}
.pin {
    display: flex;
    align-items: center;
    justify-content: center;
    width: 68px;
    height: 47px;
    margin-left: 4px;
}
.open {
    border: 1px solid #555;
    border-radius: 3px;
    background: rgba(255, 255, 255, 0.8);
}
.pin + .pin:nth-child(4) {
    margin-left: 0;
}
.glass {
    border: 1px solid #b4c3de;
    border-radius: 3px;
    background: linear-gradient(145deg, #8da2cb, #4a66a4 50%, #3a5797 51%, #5470ac);
}
.first {
    width: 62px;
    margin: 0 4px 0 1px;
    box-shadow: 3px 0 0 #4a66a4, 4px 0 0 #b4c3de;
}
.lit {
    width: 67px;
    background: linear-gradient(145deg, #d9e0f0, #a8b6d6 50%, #8798c4 51%, #b3bfdc);
}
.taskbar .tray {
    gap: 11px;
    font-size: 14px;
    line-height: 22px;
}
.taskbar .tray svg:first-child {
    margin-right: 7px;
}
.taskbar time {
    width: 86px;
    margin: 0 5px;
}
.taskbar .peek {
    width: 14px;
    margin-left: 5px;
    border-color: #6e85ad;
    background: linear-gradient(160deg, #5a73a5 40%, #1a3a74 50%, #23488e);
}
```

FILE: charts.js
```javascript
// Simple seeded generator so the traces look the same on every load
let seed = 20230814;
function rnd() {
    seed = (seed * 1664525 + 1013904223) % 4294967296;
    return seed / 4294967296;
}

function setup(id) {
    const c = document.getElementById(id);
    c.width = c.clientWidth;
    c.height = c.clientHeight;
    return c;
}

function grid(g, w, h, rows) {
    g.fillStyle = "#000";
    g.fillRect(0, 0, w, h);
    for (let i = 0; i <= 48; i++) {
        g.fillStyle = i % 8 ? "#06260d" : "#155f24";
        g.fillRect(Math.round(i * w / 48), 0, 1, h);
    }
    for (let i = 0; i <= rows; i++) {
        g.fillStyle = i % 5 ? "#06260d" : "#155f24";
        g.fillRect(0, Math.round(i * h / rows), w, 1);
    }
}

function drawAscope() {
    const c = setup("ascope");
    const g = c.getContext("2d");
    const w = c.width, h = c.height;
    grid(g, w, h, 21);
    g.fillStyle = "#e8e050";
    g.fillRect(Math.round(w * 0.737), 0, 1, h);
    g.strokeStyle = "#fff";
    g.lineWidth = 1.5;
    g.beginPath();
    g.moveTo(1, h);
    for (let x = 1; x < w; x += 0.7) {
        let v = 1.008 + 0.078 * Math.exp(-Math.pow(x / 19, 1.5));
        if (x < 4) v = 1.07;
        v += (rnd() - 0.5) * 0.015;
        g.lineTo(x, h - (v - 0.99) / 0.21 * h);
    }
    g.stroke();
}

function drawVelocity() {
    const c = setup("velocity");
    const g = c.getContext("2d");
    const w = c.width, h = c.height;
    grid(g, w, h, 20);
    g.strokeStyle = "#fff";
    g.lineWidth = 1.3;
    g.beginPath();
    g.moveTo(1, h);
    for (let x = 1; x < 76; x += 0.8) {
        const late = x > 44;
        const v = (late ? 0.57 : 0.59 - 0.08 * Math.cos((x - 18) / 3.7)) + (rnd() - 0.5) * (late ? 0.2 : 0.08);
        g.lineTo(x, v * h);
    }
    g.stroke();
    g.fillStyle = "#fff";
    g.fillRect(58, 0, 1, h * 0.55);
    g.fillRect(69, h * 0.5, 1, h);
    // past 2800 m the signal is pure noise
    for (let x = 70; x < w; x++) {
        const early = x < 104;
        let top = rnd() < (early ? 0.5 : 0.77) ? 0 : 0.1 + rnd() * 0.5;
        let bottom = rnd() < (early ? 0.55 : 0.74) ? 1 : 0.5 + rnd() * 0.5;
        if (x < 80) bottom = 0.65;
        g.fillRect(x, top * h, 1, (bottom - top) * h);
    }
}

// Lidar palette, 0 = low end, 1 = high end
const stops = [
    [0, 200, 200, 200], [0.14, 48, 48, 255], [0.48, 0, 255, 0], [0.58, 255, 255, 40],
    [0.68, 255, 190, 0], [0.75, 255, 0, 0], [1, 140, 0, 144]
];
function palette(t) {
    t = Math.max(0, Math.min(1, t));
    let i = 1;
    while (i < stops.length - 1 && t > stops[i][0]) i++;
    const a = stops[i - 1], b = stops[i];
    const k = (t - a[0]) / (b[0] - a[0]);
    return [a[1] + (b[1] - a[1]) * k, a[2] + (b[2] - a[2]) * k, a[3] + (b[3] - a[3]) * k];
}

function hash(x, y) {
    const n = Math.sin(x * 127.1 + y * 311.7) * 43758.5453;
    return n - Math.floor(n);
}
function smooth(x, y) {
    const xi = Math.floor(x), yi = Math.floor(y);
    let u = x - xi, v = y - yi;
    u = u * u * (3 - 2 * u);
    v = v * v * (3 - 2 * v);
    const a = hash(xi, yi), b = hash(xi + 1, yi), c = hash(xi, yi + 1), d = hash(xi + 1, yi + 1);
    return a + (b - a) * u + (c - a) * v + (a - b - c + d) * u * v;
}

function paint(id, pixel) {
    const c = setup(id);
    const g = c.getContext("2d");
    const img = g.createImageData(c.width, c.height);
    for (let x = 0; x < c.width; x++) {
        for (let y = 0; y < c.height; y++) {
            const p = pixel(x / c.width, y / c.height, x, y);
            const i = (y * c.width + x) * 4;
            img.data[i] = p[0];
            img.data[i + 1] = p[1];
            img.data[i + 2] = p[2];
            img.data[i + 3] = 255;
        }
    }
    g.putImageData(img, 0, 0);
}

function drawBackscatter() {
    paint("backscatter", function (fx, fy) {
        if (fy > 0.993) return rnd() < 0.6 ? [0, 40, 0] : [0, 220, 0];
        const speck = fy < 0.53 ? 0.17 * (1 - fy * 1.5) : 0.0006;
        if (rnd() < speck) return [0, 20, 0];
        let t = 0.48;
        if (fy < 0.5) t += 0.065 * (1 - fy / 0.5) + (rnd() - 0.5) * 0.08 * (1 - fy * 1.6);
        else if (fy > 0.86) t += 0.045 * Math.min(1, (fy - 0.86) / 0.09) + (rnd() - 0.5) * 0.008;
        else t += (rnd() - 0.5) * 0.02 - (fy > 0.6 && fy < 0.82 ? 0.012 : 0);
        return palette(t);
    });
}

// x, y, radius x, radius y, strength
const blobs = [
    [0.435, 0.95, 0.014, 0.014, 0.34], [0.483, 0.975, 0.014, 0.022, 0.33], [0.505, 0.965, 0.014, 0.02, 0.3],
    [0.53, 0.98, 0.012, 0.01, 0.25], [0.49, 0.97, 0.06, 0.03, 0.12],
    [0.11, 0.81, 0.04, 0.03, 0.2], [0.48, 0.82, 0.035, 0.03, 0.19], [0.33, 0.83, 0.03, 0.02, 0.13],
    [0.07, 0.985, 0.015, 0.01, 0.16], [0.27, 0.98, 0.03, 0.014, 0.13], [0.21, 0.7, 0.025, 0.015, 0.13],
    [0.36, 0.68, 0.05, 0.04, 0.15], [0.39, 0.75, 0.03, 0.03, 0.12], [0.56, 0.98, 0.03, 0.01, 0.12],
    [0.93, 0.93, 0.07, 0.035, -0.22], [0.86, 0.83, 0.05, 0.012, -0.17], [0.95, 0.85, 0.05, 0.015, -0.17],
    [0.02, 0.82, 0.02, 0.015, -0.2], [0.4, 0.86, 0.012, 0.04, -0.15], [0.16, 0.96, 0.06, 0.02, -0.13],
    [0.02, 0.93, 0.03, 0.05, -0.12], [0.25, 0.77, 0.08, 0.018, -0.13], [0.62, 0.8, 0.05, 0.015, -0.12],
    [0.67, 0.91, 0.02, 0.012, -0.16], [0.9, 0.65, 0.12, 0.1, -0.08], [0.83, 0.89, 0.06, 0.006, 0.1]
];

function drawDoppler() {
    const streak = [];
    for (let i = 0; i < 4000; i++) streak.push(rnd());
    paint("doppler", function (fx, fy, x, y) {
        if (fy > 0.993) return rnd() < 0.75 ? [0, 20, 0] : [0, 220, 0];
        const bias = streak[x] * 0.7 + smooth(x / 9, 2) * 0.3;
        const edge = 0.57 + 0.18 * (streak[x] - 0.5) * (fx < 0.75 ? 1 : 0.3) - (fx > 0.7 ? 0.2 * (fx - 0.7) : 0);
        const noise = Math.max(0, Math.min(1, (edge - fy) / 0.12));
        if (fy < 0.75 && rnd() < noise * 0.97) {
            // returns stick to one column for a few gates at a time
            const r = (rnd() + hash(x, Math.floor(y / 5 + streak[x] * 5))) / 2;
            if (r < 0.2 + bias * 0.54) return [236, 0, 236];
            if (r > 0.82 - (0.5 - fy) * 0.08) return [30, 10, 30];
            return palette(0.2 + rnd() * 0.4 + (1 - fx * 0.5) * streak[x + 900] * 0.4);
        }
        // tilted coordinates keep the layers from lining up with the axes
        const ty = y + x * 0.12 + smooth(x / 30, 7) * 12;
        let t = 0.46 + (smooth(x / 26, ty / 13) - 0.5) * 0.1 + (smooth(x / 10, ty / 7) - 0.5) * 0.08 + (smooth(x / 4, y / 4) - 0.5) * 0.06;
        const high = Math.max(0, Math.min(1, (0.79 - fy) / 0.16));
        t += high * (0.16 * Math.max(0, 1 - fx * 1.1) + 0.015);
        t += high * (rnd() - 0.5) * 0.13;
        t += high * (streak[x] - 0.5) * 0.07;
        for (const b of blobs) {
            const dx = (fx - b[0]) / b[2], dy = (fy - b[1]) / b[3];
            const d = dx * dx + dy * dy;
            if (d < 6) t += b[4] * Math.exp(-d) * (0.5 + smooth(x / 5, y / 4));
        }
        return palette(t);
    });
}

drawAscope();
drawVelocity();
drawBackscatter();
drawDoppler();
```
